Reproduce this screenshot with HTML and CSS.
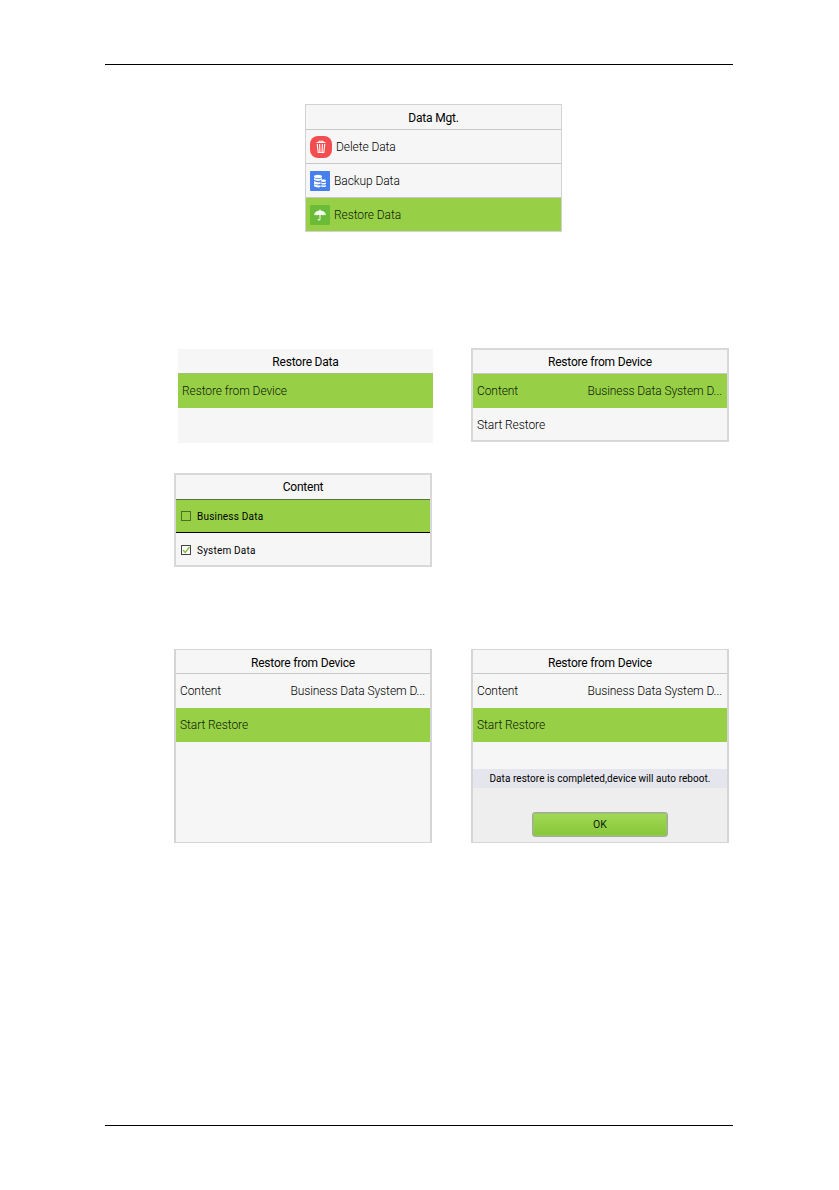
FILE: index.html
```html
<!DOCTYPE html>
<html lang="en">
<head>
    <meta charset="UTF-8">
    <meta name="viewport" content="width=device-width, initial-scale=1.0">
    <title>Restore Data</title>
    <link rel="stylesheet" href="styles.css">
</head>
<body>
    <main class="page">
        <!-- Data Mgt. menu -->
        <section class="screen menu">
            <h2>Data Mgt.</h2>
            <div class="row line">
                <svg class="icon-delete" viewBox="0 0 22 22">
                    <rect width="22" height="22" rx="8" fill="#f44d50"/>
                    <path d="M6.500 6.500h9M9 6V5.200h4V6M7.200 8l1 8.500h5.600l1-8.500M9.600 8l.3 8M12.400 8l-.3 8" fill="none" stroke="#fff" stroke-width="1.100"/>
                </svg>
                <span>Delete Data</span>
            </div>
            <div class="row line">
                <svg class="icon" viewBox="0 0 20 20">
                    <rect width="20" height="20" rx="1" fill="#4680ee"/>
                    <g fill="#fff">
                        <ellipse cx="8" cy="5.500" rx="4" ry="1.700"/>
                        <path d="M4 7q4 2.200 8 0v1.800q-4 2.200-8 0zM4 10q4 2.200 6.500 1v1.800q-3.500 1.400-6.500 0zM4 13.300q3 1.600 6.500 1v1.800q-3.500.9-6.500-.8z"/>
                        <ellipse cx="13.500" cy="9.800" rx="2.500" ry="1.200"/>
                        <path d="M11.200 11.400q2.300 1.200 4.800 0v1.600q-2.500 1.200-4.800 0zM11.200 13.900q2.300 1.200 4.800 0v1.600q-2.500 1.200-4.800 0z"/>
                    </g>
                </svg>
                <span>Backup Data</span>
            </div>
            <div class="row active">
                <svg class="icon" viewBox="0 0 20 20">
                    <rect width="20" height="20" rx="1" fill="#6abb38"/>
                    <path d="M4 10.500q.5-4.500 5.500-5V4.500h1v1q5 .5 5.500 5-1.500-1.500-3 0-1.300-1.200-2.500-.2V14q0 1.500-1.500 1.500T7.500 14h1q0 .6.500.6t.5-.6v-3.700q-1.200-1-2.500.2-1.500-1.500-3 0z" fill="#f4faee"/>
                </svg>
                <span>Restore Data</span>
            </div>
        </section>

        <!-- Choosing what to restore -->
        <div class="screens select">
            <section class="screen plain">
                <h2>Restore Data</h2>
                <div class="row active">Restore from Device</div>
                <div class="row"></div>
            </section>
            <section class="screen thick">
                <h2>Restore from Device</h2>
                <div class="row active"><span>Content</span><span>Business Data System D...</span></div>
                <div class="row">Start Restore</div>
            </section>
            <section class="screen thick content">
                <h2>Content</h2>
                <div class="row active check">
                    <svg class="box" viewBox="0 0 10 10"><rect x=".5" y=".5" width="9" height="9" fill="none" stroke="#49702a"/></svg>
                    <span>Business Data</span>
                </div>
                <div class="row check">
                    <svg class="box" viewBox="0 0 10 10">
                        <rect x=".5" y=".5" width="9" height="9" fill="#fff" stroke="#444"/>
                        <path d="M2 5l2.300 2.500L8.500 2" fill="none" stroke="#85bb45" stroke-width="1.400"/>
                    </svg>
                    <span>System Data</span>
                </div>
            </section>
        </div>

        <!-- Running the restore -->
        <div class="screens run">
            <section class="screen tall">
                <h2>Restore from Device</h2>
                <div class="row"><span>Content</span><span>Business Data System D...</span></div>
                <div class="row active">Start Restore</div>
            </section>
            <section class="screen tall">
                <h2>Restore from Device</h2>
                <div class="row"><span>Content</span><span>Business Data System D...</span></div>
                <div class="row active">Start Restore</div>
                <div class="dialog">
                    <p>Data restore is completed,device will auto reboot.</p>
                    <button>OK</button>
                </div>
            </section>
        </div>
    </main>
</body>
</html>
```
FILE: styles.css
```css
* {
    margin: 0;
    padding: 0;
    box-sizing: border-box;
}

body {
    background-color: #fff;
    font-family: Roboto, "Liberation Sans", sans-serif;
    font-size: 12px;
    font-weight: 300;
    color: #000;
}

.page {
    width: 628px;
    height: 1062px;
    margin: 64px 0 0 105px;
    border-top: 1px solid #000;
    border-bottom: 1px solid #000;
}

/* Device screens */
.screen {
    width: 258px;
    background-color: #f6f6f6;
    border: 1px solid #d2d2d2;
    overflow: hidden;
}

.screen h2 {
    height: 25px;
    line-height: 26px;
    border-bottom: 1px solid #c8c8c8;
    text-align: center;
    font-size: 12px;
    font-weight: 400;
    letter-spacing: -0.2px;
    color: #000;
}

.row {
    display: flex;
    justify-content: space-between;
    align-items: center;
    height: 34px;
    padding: 0 5px 0 4px;
    letter-spacing: -0.08px;
    white-space: nowrap;
}

.line {
    border-bottom: 1px solid #c8c8c8;
}

.active {
    background-color: #97d047;
    color: #0f2005;
}

/* Menu with icons */
.menu {
    width: 257px;
    height: 128px;
    margin: 39px 0 0 200px;
}

.menu .row {
    justify-content: flex-start;
    gap: 4px;
}

.icon {
    width: 20px;
    height: 20px;
}

.icon-delete {
    width: 22px;
    height: 22px;
}

/* Groups of screens */
.screens {
    display: grid;
    grid-template-columns: 258px 258px;
    column-gap: 39px;
    margin-left: 69px;
}

.select {
    margin-top: 116px;
    row-gap: 30px;
}

.thick {
    height: 94px;
    border-width: 2px;
    border-color: #d8d8d8;
}

.thick h2 {
    height: 24px;
    line-height: 25px;
}

.plain {
    width: 255px;
    height: 94px;
    margin: 1px 0 0 4px;
    border: none;
}

.plain h2 {
    border-color: #a0c080;
}

.content h2 {
    height: 25px;
    border-color: #56713a;
}

.content .active {
    height: 33px;
    border-bottom: 1px solid #000;
}

.check {
    justify-content: flex-start;
    gap: 6px;
    padding-left: 5px;
    font-size: 10px;
    font-weight: 400;
    letter-spacing: 0.2px;
    color: #000;
}

.box {
    width: 10px;
    height: 10px;
}

.run {
    margin-top: 82px;
}

.tall {
    height: 194px;
    border-width: 1px 2px;
    border-color: #d5d5d5;
}

.tall h2 {
    height: 24px;
}

/* Restore finished message */
.dialog {
    height: 73px;
    margin-top: 27px;
    background-color: #eee;
    text-align: center;
}

.dialog p {
    height: 19px;
    line-height: 20px;
    background-color: #e5e6ed;
    font-size: 10px;
    font-weight: 400;
    letter-spacing: 0.05px;
    color: #000;
}

.dialog button {
    width: 136px;
    height: 25px;
    margin-top: 24px;
    border: 1px solid #a3aa9c;
    border-radius: 3px;
    background: linear-gradient(#a3d95c, #94d046 50%, #88c63a);
    box-shadow: inset 0 0 0 1px #9ac468;
    font-family: inherit;
    font-size: 10.5px;
    font-weight: 400;
    color: #10200a;
}
```
